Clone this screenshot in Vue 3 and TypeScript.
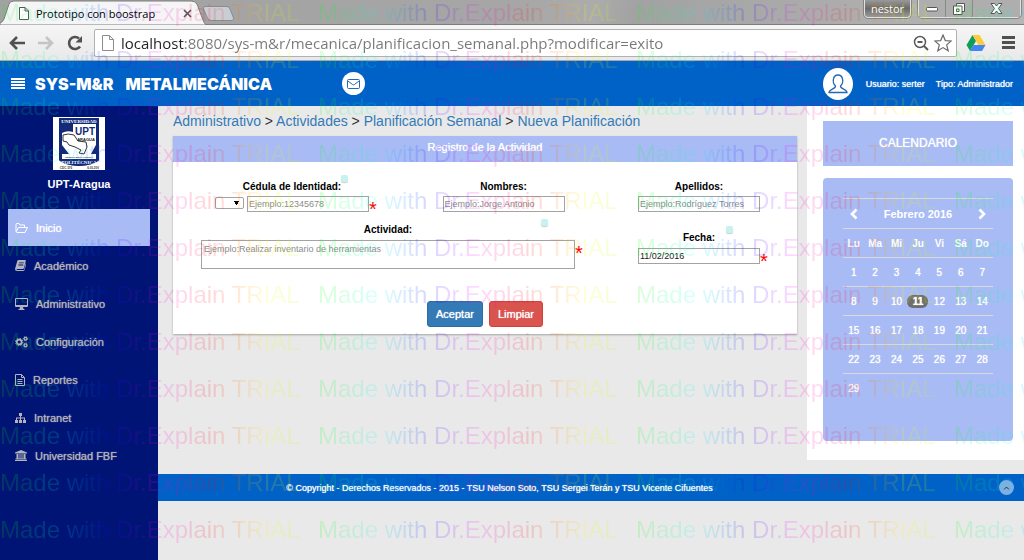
<script setup lang="ts">
import { ref } from 'vue'

interface NavItem {
  label: string
  icon: string
}

const address = ref('localhost:8080/sys-m&r/mecanica/planificacion_semanal.php?modificar=exito')
const fecha = ref('11/02/2016')
const selected = ref(11)
const active = ref('Inicio')

const nav: NavItem[] = [
  { label: 'Inicio', icon: 'folder' },
  { label: 'Académico', icon: 'book' },
  { label: 'Administrativo', icon: 'desktop' },
  { label: 'Configuración', icon: 'cogs' },
  { label: 'Reportes', icon: 'file' },
  { label: 'Intranet', icon: 'sitemap' },
  { label: 'Universidad FBF', icon: 'bank' },
]

const crumbs: string[] = ['Administrativo', 'Actividades', 'Planificación Semanal', 'Nueva Planificación']
const weekdays: string[] = ['Lu', 'Ma', 'Mi', 'Ju', 'Vi', 'Sá', 'Do']

const weeks: (number | null)[][] = Array.from({ length: 5 }, (_, w) =>
  Array.from({ length: 7 }, (_, d) => {
    const day = w * 7 + d + 1
    return day <= 29 ? day : null
  }),
)
</script>

<template>
  <div class="window">
    <div class="titlebar">
      <div class="tab">
        <svg class="tab-shape" viewBox="0 0 206 25" preserveAspectRatio="none" aria-hidden="true">
          <path d="M0 25V23Q3 22 4 19L9 4Q10 1 14 1H191Q195 1 197 4L203 20Q204 23 206 25Z" fill="#f5f5f5" stroke="#7d7d7d" />
        </svg>
        <svg class="page-icon" width="12" height="15" viewBox="0 0 12 15" aria-hidden="true">
          <path d="M1.5 1.500H7L10.500 5V13.500H1.500ZM7 1.500V5H10.500" fill="#fff" stroke="#555" />
        </svg>
        <span class="tab-title">Prototipo con boostrap</span>
        <button class="plain" aria-label="Cerrar pestaña">
          <svg width="9" height="9" viewBox="0 0 9 9"><path d="M1 1L8 8M8 1L1 8" stroke="#555" stroke-width="1.600" /></svg>
        </button>
      </div>
      <button class="plain new-tab" aria-label="Nueva pestaña">
        <svg width="33" height="15" viewBox="0 0 33 15"><path d="M3 .5H25Q27 .5 28 3L31.500 12Q32 14.500 30 14.500H9Q6.500 14.500 5.500 12L1.500 3Q1 .5 3 .5Z" fill="#c9ced5" stroke="#8b8b8b" /></svg>
      </button>
      <div class="win-controls">
        <button class="user-tag">nestor</button>
        <div class="win-buttons">
          <button aria-label="Minimizar"><svg width="12" height="6" viewBox="0 0 12 6"><rect x=".5" y="1.500" width="11" height="3.500" rx="1" fill="#fff" stroke="#555" /></svg></button>
          <button aria-label="Restaurar"><svg width="12" height="12" viewBox="0 0 12 12"><path d="M3.500 .5H11.500V8.500H9V11.500H.5V3H3.500Z" fill="#fff" stroke="#555" /><path d="M3.500 3H9V8.500M3.500 6H6V8.500H3.500Z" fill="none" stroke="#555" /></svg></button>
          <button class="close" aria-label="Cerrar"><svg width="13" height="11" viewBox="0 0 13 11"><path d="M1 .5H4.500L6.500 3L8.500 .5H12L8.500 5.500L12 10.500H8.500L6.500 8L4.500 10.500H1L4.500 5.500Z" fill="#fff" stroke="#555" /></svg></button>
        </div>
      </div>
    </div>

    <div class="toolbar">
      <button class="plain" aria-label="Atrás">
        <svg width="16" height="14" viewBox="0 0 16 14"><path d="M8 1L2 7L8 13M2 7H16" fill="none" stroke="#505050" stroke-width="2.600" /></svg>
      </button>
      <button class="plain" aria-label="Adelante">
        <svg width="16" height="14" viewBox="0 0 16 14"><path d="M8 1L14 7L8 13M14 7H0" fill="none" stroke="#c4c4c4" stroke-width="2.600" /></svg>
      </button>
      <button class="plain" aria-label="Recargar">
        <svg width="16" height="16" viewBox="0 0 16 16"><path d="M13 11.500A6 6 0 1 1 12 3.500" fill="none" stroke="#505050" stroke-width="2.600" /><path d="M15 1V7.500H8.500Z" fill="#505050" /></svg>
      </button>
      <div class="omnibox">
        <svg width="12" height="16" viewBox="0 0 12 16" aria-hidden="true"><path d="M.5 .5H7.500L11.500 4.500V15.500H.5ZM7.500 .5V4.500H11.500" fill="#fff" stroke="#8d8d8d" /></svg>
        <input v-model="address" class="url" type="text" aria-label="Dirección" />
        <svg width="16" height="16" viewBox="0 0 16 16" aria-hidden="true"><circle cx="7" cy="7" r="5.500" fill="none" stroke="#5a5a5a" stroke-width="1.500" /><path d="M4.500 7H9.500M11 11L15 15" stroke="#5a5a5a" stroke-width="2" /></svg>
        <svg width="18" height="18" viewBox="0 0 18 18" aria-hidden="true"><path d="M9 1L11.300 6.600L17.200 7L12.700 10.900L14.200 16.800L9 13.600L3.800 16.800L5.300 10.900L.8 7L6.700 6.600Z" fill="#fff" stroke="#6a6a6a" stroke-width="1.200" /></svg>
      </div>
      <svg class="drive" width="20" height="18" viewBox="0 0 20 18" aria-hidden="true">
        <path d="M6.500 1L10 7L4 17L.5 11Z" fill="#0f9d58" />
        <path d="M6.500 1H13.500L19.500 11H12.500Z" fill="#fdcb3c" />
        <path d="M7.500 11H19.500L16 17H4Z" fill="#4285f4" />
      </svg>
      <button class="plain" aria-label="Menú del navegador">
        <svg width="13" height="13" viewBox="0 0 13 13"><path d="M0 1.500H13M0 6.500H13M0 11.500H13" stroke="#505050" stroke-width="3" /></svg>
      </button>
    </div>

    <header class="app-header">
      <button class="plain" aria-label="Menú">
        <svg width="14" height="11" viewBox="0 0 14 11"><path d="M0 1H14M0 4H14M0 7H14M0 10H14" stroke="#fff" stroke-width="2" /></svg>
      </button>
      <h1><span>SYS-M&amp;R</span><span>METALMECÁNICA</span></h1>
      <button class="plain mail" aria-label="Mensajes">
        <svg width="13" height="10" viewBox="0 0 13 10"><rect x=".5" y=".5" width="12" height="9" rx="1" fill="none" stroke="#2468b4" /><path d="M1 2L5.500 5.500Q6.500 6.200 7.500 5.500L12 2" fill="none" stroke="#2468b4" /></svg>
      </button>
      <div class="account">
        <span class="avatar">
          <svg width="20" height="20" viewBox="0 0 20 20" aria-hidden="true"><path d="M7.500 12C4 9 4.500 1 10 1S16 9 12.500 12C12 15 18.500 14.500 19 18.500H1C1.500 14.500 8 15 7.500 12Z" fill="none" stroke="#2468b4" stroke-width="1.300" /></svg>
        </span>
        <span>Usuario: serter</span>
        <span>Tipo: Administrador</span>
      </div>
    </header>

    <div class="body">
      <aside class="sidebar">
        <svg class="crest" width="52" height="53" viewBox="0 0 52 53" role="img" aria-label="Universidad Politécnica Territorial de Aragua">
          <rect width="52" height="53" fill="#fff" />
          <path d="M6 1H46V43Q42 48 26 49Q10 48 6 43Z" fill="#122a78" />
          <path d="M9 7H43V42H9Z" fill="#fff" />
          <path d="M9 7H20V15Q14 13 9 16ZM44 26L38 37H43ZM9 28L16 37H9Z" fill="#122a78" />
          <path d="M10 18Q15 16 21 18L25 24L33 25L34 30L31 37L26 36L28 33L22 30L16 28L14 25L10 24Z" fill="#fff" stroke="#333" />
          <text x="26" y="6" text-anchor="middle" font-size="5" fill="#fff" class="serif">UNIVERSIDAD</text>
          <text x="32" y="18" text-anchor="middle" font-size="10" fill="#122a78">UPT</text>
          <text x="33" y="24" text-anchor="middle" font-size="4" fill="#222">ARAGUA</text>
          <text x="26" y="41" text-anchor="middle" font-size="2" fill="#222">FEDERICO BRITO FIGUEROA</text>
          <path d="M6 42H46V43Q42 48 26 49Q10 48 6 43Z" fill="#122a78" />
          <text x="26" y="47" text-anchor="middle" font-size="5" fill="#fff" class="serif">POLITÉCNICA</text>
          <text x="13" y="52" text-anchor="middle" font-size="3" fill="#333">CDC 376</text>
          <text x="40" y="52" text-anchor="middle" font-size="3" fill="#333">6.03.200</text>
        </svg>
        <strong class="brand">UPT-Aragua</strong>
        <nav>
          <a v-for="item in nav" :key="item.label" href="#" :class="{ active: active === item.label }" @click.prevent="active = item.label">
            <svg v-if="item.icon === 'folder'" width="13" height="10" viewBox="0 0 13 10" fill="none" stroke="currentColor"><path d="M1 8.500V1.500Q1 .5 2 .5H4L5 2H9.500V4.500M1 9L3.500 4.500H12.500L10 9.500H1.500" /></svg>
            <svg v-else-if="item.icon === 'book'" width="11" height="11" viewBox="0 0 11 11"><path d="M3.500 0H10Q11 0 10.800 1L9 8Q8.700 9 7.800 9H2Q1 9.300 2 10H9L10.600 4V3Q11.300 4 11 5L9.500 10Q9.200 11 8 11H2Q0 11 0 9L2.200 1.300Q2.500 0 3.500 0ZM4 2.400V3.200H8.800V2.400ZM3.400 4.600V5.400H8.200V4.600Z" fill="currentColor" fill-rule="evenodd" /></svg>
            <svg v-else-if="item.icon === 'desktop'" width="13" height="12" viewBox="0 0 13 12"><path d="M1 0H12Q13 0 13 1V8Q13 9 12 9H8L8.500 11H9.500V12H3.500V11H4.500L5 9H1Q0 9 0 8V1Q0 0 1 0ZM1 1V7H12V1Z" fill="currentColor" fill-rule="evenodd" /></svg>
            <svg v-else-if="item.icon === 'cogs'" width="13" height="12" viewBox="0 0 13 12" fill="none" stroke="currentColor"><circle cx="4.200" cy="6" r="2.400" stroke-width="1.700" /><circle cx="4.200" cy="6" r="3.700" stroke-dasharray="1.450" /><circle cx="10.500" cy="2.700" r="1.400" stroke-width="1.200" /><circle cx="10.500" cy="2.700" r="2.200" stroke-width=".8" stroke-dasharray="1" /><circle cx="10.500" cy="9.300" r="1.400" stroke-width="1.200" /><circle cx="10.500" cy="9.300" r="2.200" stroke-width=".8" stroke-dasharray="1" /></svg>
            <svg v-else-if="item.icon === 'file'" width="10" height="12" viewBox="0 0 10 12" fill="none" stroke="currentColor"><path d="M.5 .5H6.500L9.500 3.500V11.500H.5ZM6.500 .5V3.500H9.500M2.500 5.500H7.500M2.500 7.500H7.500M2.500 9.500H7.500" /></svg>
            <svg v-else-if="item.icon === 'sitemap'" width="11" height="10" viewBox="0 0 11 10"><path d="M4 0H7V3H6V4.500H10V7H11V10H8V7H9V5.500H6V7H7V10H4V7H5V5.500H2V7H3V10H0V7H1V4.500H5V3H4Z" fill="currentColor" /></svg>
            <svg v-else width="12" height="11" viewBox="0 0 12 11"><path d="M6 0L12 2.500V3.500H0V2.500ZM1.500 4H3.500V8.500H4.500V4H5.500V8.500H6.500V4H7.500V8.500H8.500V4H10.500V8.500H11.500V9.500H.5V8.500H1.500ZM0 10H12V11H0Z" fill="currentColor" /></svg>
            <span>{{ item.label }}</span>
          </a>
        </nav>
      </aside>

      <div class="content">
        <div class="columns">
          <main>
            <div class="crumbs">
              <template v-for="(crumb, i) in crumbs" :key="crumb"><template v-if="i"> &gt; </template><a href="#">{{ crumb }}</a></template>
            </div>
            <form class="panel" @submit.prevent>
              <h2>Registro de la Actividad</h2>
              <div class="row first">
                <div class="field id-field">
                  <label for="cedula">Cédula de Identidad:</label>
                  <div class="controls">
                    <select aria-label="Tipo de documento"><option></option><option>V</option><option>E</option></select>
                    <input id="cedula" type="text" placeholder="Ejemplo:12345678" />
                    <span class="required">*</span>
                  </div>
                  <i class="hint"></i>
                </div>
                <div class="field">
                  <label for="nombres">Nombres:</label>
                  <input id="nombres" type="text" placeholder="Ejemplo:Jorge Antonio" />
                </div>
                <div class="field">
                  <label for="apellidos">Apellidos:</label>
                  <input id="apellidos" type="text" placeholder="Ejemplo:Rodríguez Torres" />
                </div>
              </div>
              <div class="row second">
                <div class="field activity-field">
                  <label for="actividad">Actividad:</label>
                  <div class="controls">
                    <textarea id="actividad" placeholder="Ejemplo:Realizar inventario de herramientas"></textarea>
                    <span class="required">*</span>
                  </div>
                  <i class="hint"></i>
                </div>
                <div class="field date-field">
                  <label for="fecha">Fecha:</label>
                  <div class="controls">
                    <input id="fecha" v-model="fecha" type="text" />
                    <span class="required">*</span>
                  </div>
                  <i class="hint"></i>
                </div>
              </div>
              <div class="actions">
                <button class="btn accept" type="submit">Aceptar</button>
                <button class="btn reset" type="reset">Limpiar</button>
              </div>
            </form>
          </main>

          <aside class="agenda">
            <h2>CALENDARIO</h2>
            <div class="calendar">
              <table>
                <thead>
                  <tr>
                    <th><button class="plain" aria-label="Mes anterior"><svg width="8" height="12" viewBox="0 0 8 12"><path d="M6.500 1.500L2 6L6.500 10.500" fill="none" stroke="#fff" stroke-width="2.600" /></svg></button></th>
                    <th colspan="5" class="month">Febrero 2016</th>
                    <th><button class="plain" aria-label="Mes siguiente"><svg width="8" height="12" viewBox="0 0 8 12"><path d="M1.500 1.500L6 6L1.500 10.500" fill="none" stroke="#fff" stroke-width="2.600" /></svg></button></th>
                  </tr>
                  <tr><th v-for="d in weekdays" :key="d">{{ d }}</th></tr>
                </thead>
                <tbody>
                  <tr v-for="(week, w) in weeks" :key="w">
                    <td v-for="(day, d) in week" :key="d">
                      <button v-if="day" class="plain day" :class="{ selected: day === selected }" @click="selected = day">{{ day }}</button>
                    </td>
                  </tr>
                </tbody>
              </table>
            </div>
          </aside>
        </div>

        <footer>
          <span>© Copyright - Derechos Reservados - 2015 - TSU Nelson Soto, TSU Sergei Terán y TSU Vicente Cifuentes</span>
          <a class="to-top" href="#" aria-label="Subir"><svg width="7" height="4" viewBox="0 0 7 4"><path d="M1 3.500L3.500 1L6 3.500" fill="none" stroke="#333" /></svg></a>
        </footer>
      </div>
    </div>

    <div class="watermark" aria-hidden="true">
      <template v-for="r in 12" :key="r">
        <span v-for="c in 4" :key="c">Made with Dr.Explain TRIAL</span>
      </template>
    </div>
  </div>
</template>

<style>
body {
  margin: 0;
  background: #e9e9e9;
}
</style>

<style scoped>
* {
  box-sizing: border-box;
}
.window {
  position: relative;
  display: flex;
  flex-direction: column;
  min-height: 100vh;
  overflow: hidden;
  font-family: "Liberation Sans", Arial, sans-serif;
  font-size: 11px;
  color: #000;
}
button,
input,
select,
textarea {
  font-family: inherit;
}
svg {
  display: block;
  flex: none;
}
.plain {
  display: block;
  padding: 0;
  border: 0;
  background: none;
  color: inherit;
}
.titlebar {
  display: flex;
  height: 25px;
  background: linear-gradient(100deg, #a2a2a2, #a6a6a6 50%, #acacac 58%, #a2a2a2 62%, #b6b6b6);
  border-bottom: 1px solid #7d7d7d;
}
.tab {
  position: relative;
  display: flex;
  align-items: center;
  width: 206px;
  height: 25px;
  padding: 1px 14px 0 18px;
}
.tab-shape {
  position: absolute;
  inset: 0;
  width: 100%;
  height: 100%;
}
.page-icon,
.tab-title,
.tab button {
  position: relative;
}
.tab-title {
  flex: 1;
  margin-left: 6px;
  font: 11px "Open Sans", sans-serif;
  white-space: nowrap;
}
.new-tab {
  margin: 6px 0 0 -4px;
  align-self: flex-start;
}
.win-controls {
  display: flex;
  gap: 7px;
  margin: 0 3px 0 auto;
}
.user-tag {
  width: 47px;
  height: 18px;
  padding: 0;
  border: 1px solid #e2e2e2;
  border-top: 0;
  border-radius: 0 0 4px 4px;
  outline: 1px solid #858585;
  background: linear-gradient(#999, #6a6a6a 50%, #9a9a9a);
  color: #fff;
  font: 11px/16px "Open Sans", sans-serif;
}
.win-buttons {
  display: flex;
  height: 18px;
  border: 1px solid #e0e0e0;
  border-top: 0;
  border-radius: 0 0 4px 4px;
  outline: 1px solid #858585;
}
.win-buttons button {
  display: grid;
  place-items: center;
  width: 27px;
  padding: 0;
  border: 0;
  border-right: 1px solid #8a8a8a;
  background: #aeaeae;
}
.win-buttons .close {
  width: 47px;
  border: 0;
}
.toolbar {
  display: flex;
  align-items: center;
  gap: 13px;
  height: 36px;
  padding: 0 9px;
  background: linear-gradient(#f5f5f5, #e9e9e9);
  border-bottom: 1px solid #a9a9a9;
}
.omnibox {
  display: flex;
  flex: 1;
  align-items: center;
  gap: 5px;
  height: 28px;
  margin: 0 -4px 0 -2px;
  padding: 0 4px 0 7px;
  border: 1px solid #b1b1b1;
  border-radius: 2px;
  background: #fff;
}
.drive {
  margin-right: 3px;
}
.url {
  flex: 1;
  min-width: 0;
  padding: 0 0 0 2px;
  border: 0;
  outline: 0;
  background: linear-gradient(90deg, #222 65px, #777 65px);
  background-clip: text;
  color: transparent;
  font: 15px/22px "Open Sans", sans-serif;
}
.app-header {
  display: flex;
  align-items: center;
  height: 45px;
  padding: 0 11px;
  background: #0061c6;
  color: #fff;
}
h1 {
  display: flex;
  gap: 12px;
  margin: 0 70px 0 10px;
  font: 900 16px "Inter", sans-serif;
}
.mail {
  display: grid;
  place-items: center;
  width: 23px;
  height: 23px;
  border-radius: 50%;
  background: #fff;
}
.account {
  display: flex;
  align-items: center;
  gap: 11px;
  margin-left: auto;
  font-size: 9px;
  text-shadow: 0 0 1px #fff;
}
.avatar {
  display: grid;
  place-items: center;
  width: 30px;
  height: 32px;
  margin-right: 2px;
  border-radius: 50%;
  background: #fff;
}
.body {
  display: flex;
  flex: 1;
}
.sidebar {
  display: flex;
  flex: none;
  flex-direction: column;
  align-items: center;
  width: 158px;
  padding: 11px 8px;
  background: #001475;
  color: #fff;
}
.crest {
  font-family: "Liberation Sans", sans-serif;
  font-weight: bold;
}
.serif {
  font-family: "Liberation Serif", serif;
}
.brand {
  margin: 7px 0 18px;
  line-height: 14px;
}
nav {
  display: flex;
  flex-direction: column;
  gap: 1px;
  width: 100%;
}
nav a {
  display: flex;
  align-items: center;
  gap: 8px;
  height: 37px;
  padding-left: 7px;
  color: #b4b4b8;
  text-decoration: none;
  text-shadow: 0 0 1px currentColor;
}
nav a.active {
  background: #a9bbf5;
  color: #fff;
}
.content {
  flex: 1;
  min-width: 0;
}
.columns {
  display: flex;
  gap: 10px;
}
main {
  flex: 1;
  min-width: 0;
  padding: 5px 0 0 15px;
}
.crumbs {
  font-size: 14px;
  line-height: 20px;
  color: #333;
}
.crumbs a {
  color: #337ab7;
  text-decoration: none;
}
.panel {
  margin-top: 5px;
  padding-bottom: 7px;
  background: #fff;
  box-shadow: 0 1px 2px rgb(0 0 0 / 30%);
}
.panel h2 {
  margin: 0;
  background: #a9bbf5;
  color: #fff;
  font-size: 11px;
  font-weight: 400;
  line-height: 23px;
  padding-bottom: 3px;
  text-align: center;
  text-shadow: 0 0 1px #fff;
}
.row {
  display: flex;
  justify-content: space-between;
  align-items: flex-start;
}
.first {
  padding: 19px 37px 0 42px;
}
.second {
  gap: 63px;
  padding: 12px 37px 0 28px;
}
.field {
  position: relative;
  display: flex;
  flex-direction: column;
  gap: 3px;
  width: 122px;
}
.id-field {
  width: 154px;
}
.activity-field {
  flex: 1;
  gap: 4px;
}
.date-field {
  gap: 4px;
  padding-top: 8px;
}
label {
  font-size: 10px;
  font-weight: 700;
  line-height: 12px;
  text-align: center;
}
.controls {
  position: relative;
  display: flex;
  gap: 3px;
}
.panel input,
textarea {
  flex: 1;
  min-width: 0;
  padding: 0 1px;
  border: 1px solid #a3a3a3;
  background: #fff;
  font-size: 9px;
  color: #222;
}
.panel input {
  flex-basis: 16px;
  height: 16px;
  min-height: 16px;
}
textarea {
  display: block;
  height: 29px;
  padding: 3px 2px;
  resize: none;
}
::placeholder {
  color: #8c8c8c;
}
select {
  appearance: none;
  width: 29px;
  height: 12px;
  margin-top: 1px;
  padding: 0;
  border: 1px solid #a3a3a3;
  border-radius: 2px;
  background: conic-gradient(from -37deg at 50% 100%, #000 74deg, transparent 0) 18px 3px / 5px 4px no-repeat, #fff;
}
.required {
  position: absolute;
  left: 100%;
  top: 3px;
  color: #f00;
  font-size: 20px;
  line-height: 20px;
}
.hint {
  position: absolute;
  width: 7px;
  height: 7px;
  border-radius: 2px;
  background: #c8f2f0;
  box-shadow: 0 1px 1px rgb(0 0 0 / 20%);
}
.id-field .hint {
  top: -6px;
  right: 21px;
}
.activity-field .hint {
  top: -5px;
  right: 27px;
}
.date-field .hint {
  top: 2px;
  right: 27px;
}
.actions {
  display: flex;
  justify-content: center;
  gap: 6px;
  padding-top: 32px;
}
.btn {
  height: 26px;
  padding: 0 8px;
  border: 1px solid;
  border-radius: 3px;
  color: #fff;
  font-size: 11px;
  text-shadow: 0 0 1px #fff;
}
.accept {
  border-color: #2e6da4;
  background: #337ab7;
}
.reset {
  border-color: #d43f3a;
  background: #d9534f;
}
.agenda {
  flex: none;
  width: 217px;
  height: 354px;
  padding: 15px 11px 0 16px;
  background: #fff;
}
.agenda h2 {
  margin: 0 0 12px;
  background: #a9bbf5;
  color: #fff;
  font-size: 12px;
  font-weight: 400;
  line-height: 45px;
  text-align: center;
  text-shadow: 0 0 1px #fff;
}
.calendar {
  height: 263px;
  padding: 20px;
  border-radius: 4px;
  background: #a9bbf5;
}
table {
  width: 100%;
  table-layout: fixed;
  border-collapse: collapse;
  color: #fff;
  font-size: 10px;
  text-align: center;
}
th,
td {
  height: 29px;
  padding: 0;
  border-top: 1px solid #d9d9d9;
}
.month {
  height: 30px;
  font-size: 11px;
}
th button {
  margin: 0 auto;
}
.day {
  width: 21px;
  height: 13px;
  margin: 0 auto;
  border-radius: 6px;
  font-size: 10px;
  line-height: 13px;
  text-shadow: 0 0 1px #fff;
}
.selected {
  background: #6f6f6f;
  font-weight: 700;
}
footer {
  display: flex;
  align-items: center;
  height: 27px;
  margin-top: 14px;
  padding: 0 10px 0 32px;
  background: #0061c6;
  color: #fff;
  font-size: 9px;
  text-shadow: 0 0 1px #fff;
}
footer span {
  flex: 1;
  padding-right: 190px;
  text-align: center;
}
.to-top {
  display: grid;
  place-items: center;
  width: 15px;
  height: 15px;
  border-radius: 50%;
  background: #80aee3;
}
.watermark {
  position: absolute;
  inset: 0;
  display: grid;
  grid-template-columns: repeat(4, 318px);
  grid-auto-rows: 47px;
  align-content: start;
  overflow: hidden;
  opacity: 0.15;
  pointer-events: none;
}
.watermark span {
  background: linear-gradient(90deg, #0f0, #0ff 20%, #00f 34%, #f0f 50%, #f00 67%, #ff0 84%, #8f0);
  background-clip: text;
  color: transparent;
  font-size: 24px;
  line-height: 26px;
  white-space: nowrap;
}
</style>
